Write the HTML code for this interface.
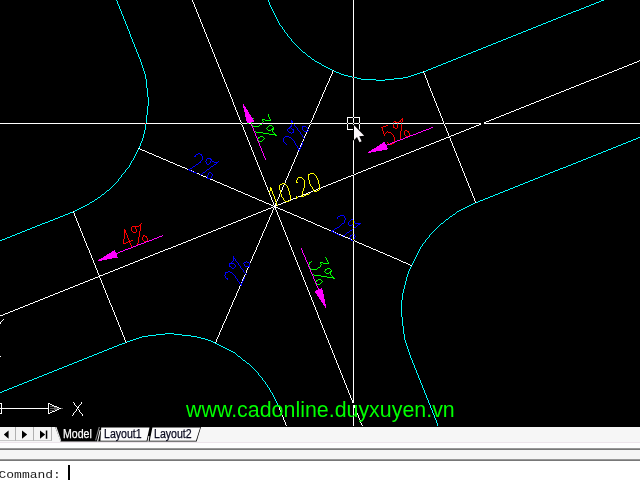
<!DOCTYPE html>
<html><head><meta charset="utf-8"><title>CAD</title>
<style>
html,body{margin:0;padding:0;background:#000;}
body{width:640px;height:480px;overflow:hidden;position:relative;font-family:"Liberation Sans",sans-serif;}
#draw{position:absolute;left:0;top:0;width:640px;height:427px;background:#000;overflow:hidden;}
.xh{position:absolute;background:#fff;mix-blend-mode:difference;}
#wm{position:absolute;left:186px;top:398px;font-size:21.4px;line-height:24px;color:#00ff00;white-space:nowrap;}
#tabs{position:absolute;left:0;top:427px;width:640px;height:15px;background:#f6f6f6;}
#gap1{position:absolute;left:0;top:442px;width:640px;height:1px;background:#ece4ea;}
#gap2{position:absolute;left:0;top:443px;width:640px;height:5px;background:#fdfdfd;}
#l1{position:absolute;left:0;top:448px;width:640px;height:2px;background:linear-gradient(#a8a8a8,#686868);}
#gap3{position:absolute;left:0;top:450px;width:640px;height:9px;background:#f5f5f5;}
#l2{position:absolute;left:0;top:459px;width:640px;height:2px;background:linear-gradient(#a8a8a8,#686868);}
#cmd{position:absolute;left:0;top:461px;width:640px;height:19px;background:#fff;}
#cmdt{position:absolute;left:-1.5px;top:466.7px;font-family:"Liberation Mono",monospace;font-size:13px;line-height:16px;color:#1a1a1a;transform:scaleY(0.87);transform-origin:0 12px;white-space:pre;}
#caret{position:absolute;left:68px;top:465px;width:2px;height:15px;background:#000;}
.btn{position:absolute;top:427px;height:14px;background:#f4f4f4;border-right:1px solid #b0b0b0;border-bottom:1px solid #c8c8c8;box-sizing:border-box;}
.tab{position:absolute;top:426.5px;height:14px;font-size:12.3px;line-height:14px;white-space:nowrap;transform:scaleX(0.86);transform-origin:0 0;-webkit-text-stroke:0.25px;}
</style></head><body>
<div id="draw">
<svg width="640" height="427" viewBox="0 -0.5 640 427" style="position:absolute;left:0;top:0" shape-rendering="crispEdges" fill="none" stroke-width="1">
<path stroke="#00ffff" d="M116 0h1M268 0h1M601 0h3M117 1h1M268 1h1M599 1h2M117 2h1M269 2h1M596 2h3M117 3h1M269 3h1M594 3h2M118 4h1M269 4h1M591 4h3M118 5h1M270 5h1M589 5h2M119 6h1M270 6h1M586 6h3M119 7h1M271 7h1M584 7h2M119 8h1M271 8h1M581 8h3M120 9h1M272 9h1M579 9h2M120 10h1M272 10h1M576 10h3M121 11h1M273 11h1M573 11h3M121 12h1M273 12h1M571 12h2M121 13h1M274 13h1M568 13h3M122 14h1M274 14h1M566 14h2M122 15h1M275 15h1M563 15h3M123 16h1M275 16h1M561 16h2M123 17h1M276 17h1M558 17h3M123 18h1M276 18h1M556 18h2M124 19h1M277 19h1M553 19h3M124 20h1M277 20h1M551 20h2M125 21h1M278 21h1M548 21h3M125 22h1M278 22h1M546 22h2M125 23h1M279 23h1M543 23h3M126 24h1M279 24h1M541 24h2M126 25h1M280 25h1M538 25h3M127 26h1M281 26h1M536 26h2M127 27h1M282 27h1M533 27h3M127 28h1M282 28h1M531 28h2M128 29h1M283 29h1M528 29h3M128 30h1M284 30h1M526 30h2M129 31h1M284 31h1M523 31h3M129 32h1M285 32h1M521 32h2M129 33h1M286 33h1M518 33h3M130 34h1M287 34h1M516 34h2M130 35h1M287 35h1M513 35h3M130 36h1M288 36h1M511 36h2M131 37h1M289 37h1M508 37h3M131 38h1M290 38h1M506 38h2M132 39h1M291 39h1M503 39h3M132 40h1M291 40h1M501 40h2M132 41h1M292 41h1M498 41h3M133 42h1M293 42h1M496 42h2M133 43h1M294 43h1M493 43h3M134 44h1M295 44h1M491 44h2M134 45h1M296 45h1M488 45h3M134 46h1M297 46h1M486 46h2M135 47h1M298 47h1M483 47h3M135 48h1M299 48h1M481 48h2M136 49h1M300 49h1M478 49h3M136 50h1M301 50h1M476 50h2M136 51h1M302 51h1M473 51h3M137 52h1M303 52h2M471 52h2M137 53h1M305 53h1M468 53h3M138 54h1M306 54h1M466 54h2M138 55h1M307 55h1M463 55h3M138 56h1M308 56h2M461 56h2M139 57h1M310 57h1M458 57h3M139 58h1M311 58h1M456 58h2M140 59h1M312 59h2M453 59h3M140 60h1M314 60h1M451 60h2M140 61h1M315 61h2M448 61h3M141 62h1M317 62h2M446 62h2M141 63h1M319 63h2M443 63h3M141 64h1M321 64h1M441 64h2M142 65h1M322 65h2M438 65h3M142 66h1M324 66h2M436 66h2M142 67h1M326 67h2M433 67h3M143 68h1M328 68h2M431 68h2M143 69h1M330 69h2M428 69h3M143 70h1M332 70h1M426 70h2M144 71h1M334 71h2M424 71h2M144 72h1M336 72h3M420 72h3M144 73h1M339 73h2M417 73h3M145 74h1M341 74h3M414 74h3M145 75h1M344 75h4M411 75h3M145 76h1M348 76h4M408 76h3M145 77h1M352 77h5M403 77h5M145 78h1M357 78h4M394 78h9M146 79h1M361 79h15M385 79h9M146 80h1M376 80h9M146 81h1M146 82h1M146 83h1M146 84h1M146 85h1M146 86h1M146 87h1M147 88h1M147 89h1M147 90h1M147 91h1M147 92h1M147 93h1M147 94h1M147 95h1M147 96h1M148 97h1M148 98h1M148 99h1M148 100h1M148 101h1M148 102h1M148 103h1M148 104h1M148 105h1M147 106h1M147 107h1M147 108h1M147 109h1M147 110h1M147 111h1M147 112h1M147 113h1M147 114h1M146 115h1M146 116h1M146 117h1M146 118h1M146 119h1M146 120h1M146 121h1M146 122h1M145 123h1M145 124h1M145 125h1M145 126h1M145 127h1M145 128h1M145 129h1M144 130h1M144 131h1M144 132h1M144 133h1M143 134h1M143 135h1M143 136h1M143 137h1M638 137h2M142 138h1M636 138h2M142 139h1M633 139h3M142 140h1M631 140h2M141 141h1M628 141h3M141 142h1M626 142h2M140 143h1M623 143h3M140 144h1M621 144h2M140 145h1M618 145h3M139 146h1M616 146h2M139 147h1M613 147h3M611 148h2M138 149h1M608 149h3M137 150h1M606 150h2M137 151h1M603 151h3M136 152h1M601 152h2M136 153h1M598 153h3M135 154h1M596 154h2M135 155h1M593 155h3M134 156h1M591 156h2M134 157h1M588 157h3M133 158h1M586 158h2M133 159h1M583 159h3M132 160h1M581 160h2M131 161h1M578 161h3M131 162h1M576 162h2M130 163h1M573 163h3M130 164h1M571 164h2M129 165h1M568 165h3M129 166h1M566 166h2M128 167h1M563 167h3M127 168h1M560 168h3M126 169h1M558 169h2M125 170h1M555 170h3M125 171h1M553 171h2M124 172h1M550 172h3M123 173h1M548 173h2M122 174h1M545 174h3M121 175h1M543 175h2M121 176h1M540 176h3M120 177h1M538 177h2M119 178h1M535 178h3M118 179h1M533 179h2M118 180h1M530 180h3M117 181h1M528 181h2M116 182h1M525 182h3M115 183h1M523 183h2M114 184h1M520 184h3M113 185h1M518 185h2M112 186h1M515 186h3M111 187h1M513 187h2M110 188h1M510 188h3M109 189h1M508 189h2M107 190h2M505 190h3M106 191h1M503 191h2M105 192h1M500 192h3M104 193h1M498 193h2M102 194h2M495 194h3M101 195h1M493 195h2M100 196h1M490 196h3M98 197h2M488 197h2M97 198h1M485 198h3M95 199h2M483 199h2M94 200h1M480 200h3M92 201h2M478 201h2M90 202h2M476 202h2M89 203h1M473 203h2M87 204h2M471 204h2M85 205h2M469 205h2M83 206h2M467 206h2M81 207h2M465 207h2M79 208h2M463 208h2M77 209h2M461 209h2M75 210h2M459 210h2M74 211h1M457 211h2M70 212h3M456 212h1M68 213h2M455 213h1M65 214h3M453 214h2M63 215h2M452 215h1M60 216h3M450 216h2M58 217h2M449 217h1M55 218h3M448 218h1M53 219h2M446 219h2M50 220h3M445 220h1M48 221h2M444 221h1M45 222h3M443 222h1M42 223h3M441 223h2M40 224h2M440 224h1M37 225h3M439 225h1M35 226h2M438 226h1M32 227h3M437 227h1M30 228h2M436 228h1M27 229h3M435 229h1M25 230h2M434 230h1M22 231h3M433 231h1M20 232h2M432 232h1M17 233h3M431 233h1M15 234h2M430 234h1M12 235h3M429 235h1M10 236h2M429 236h1M7 237h3M428 237h1M5 238h2M427 238h1M2 239h3M426 239h1M0 240h2M425 240h1M425 241h1M424 242h1M423 243h1M422 244h1M422 245h1M421 246h1M420 247h1M420 248h1M419 249h1M419 250h1M418 251h1M418 252h1M417 253h1M417 254h1M416 255h1M416 256h1M415 257h1M415 258h1M414 259h1M414 260h1M413 261h1M413 262h1M412 263h1M412 264h1M411 266h1M410 267h1M410 268h1M409 269h1M409 270h1M408 271h1M408 272h1M408 273h1M407 274h1M407 275h1M407 276h1M406 277h1M406 278h1M406 279h1M406 280h1M405 281h1M405 282h1M405 283h1M405 284h1M404 285h1M404 286h1M404 287h1M404 288h1M403 289h1M403 290h1M403 291h1M403 292h1M402 293h1M402 294h1M402 295h1M402 296h1M402 297h1M402 298h1M402 299h1M401 300h1M401 301h1M401 302h1M401 303h1M401 304h1M401 305h1M401 306h1M401 307h1M401 308h1M401 309h1M401 310h1M401 311h1M401 312h1M401 313h1M401 314h1M401 315h1M401 316h1M402 317h1M402 318h1M402 319h1M402 320h1M402 321h1M402 322h1M402 323h1M402 324h1M402 325h1M403 326h1M403 327h1M403 328h1M403 329h1M403 330h1M403 331h1M403 332h1M165 333h9M403 333h1M156 334h9M174 334h8M404 334h1M148 335h8M182 335h9M404 335h1M142 336h6M191 336h6M404 336h1M139 337h3M197 337h4M404 337h1M136 338h3M201 338h4M404 338h1M133 339h3M205 339h3M404 339h1M130 340h3M208 340h3M405 340h1M127 341h3M211 341h2M405 341h1M125 342h1M213 342h2M405 342h1M122 343h3M215 343h2M406 343h1M119 344h3M217 344h2M406 344h1M117 345h2M219 345h2M406 345h1M114 346h3M221 346h2M407 346h1M112 347h2M223 347h2M407 347h1M109 348h3M225 348h2M407 348h1M107 349h2M227 349h2M408 349h1M104 350h3M229 350h2M408 350h1M102 351h2M231 351h2M408 351h1M99 352h3M233 352h2M409 352h1M97 353h2M235 353h1M409 353h1M94 354h3M236 354h1M409 354h1M92 355h2M237 355h1M410 355h1M89 356h3M238 356h2M410 356h1M87 357h2M240 357h1M410 357h1M84 358h3M241 358h1M411 358h1M82 359h2M242 359h1M411 359h1M79 360h3M243 360h2M412 360h1M77 361h2M245 361h1M412 361h1M74 362h3M246 362h1M412 362h1M72 363h2M247 363h2M413 363h1M69 364h3M249 364h1M413 364h1M67 365h2M250 365h1M414 365h1M64 366h3M251 366h1M414 366h1M62 367h2M252 367h1M414 367h1M59 368h3M253 368h1M415 368h1M57 369h2M254 369h1M415 369h1M54 370h3M255 370h1M416 370h1M52 371h2M256 371h1M416 371h1M49 372h3M257 372h1M416 372h1M47 373h2M258 373h1M417 373h1M44 374h3M258 374h1M417 374h1M42 375h2M259 375h1M418 375h1M39 376h3M260 376h1M418 376h1M37 377h2M261 377h1M418 377h1M34 378h3M262 378h1M419 378h1M32 379h2M262 379h1M419 379h1M29 380h3M263 380h1M420 380h1M27 381h2M264 381h1M420 381h1M24 382h3M265 382h1M420 382h1M22 383h2M265 383h1M421 383h1M19 384h3M266 384h1M421 384h1M17 385h2M267 385h1M422 385h1M14 386h3M267 386h1M422 386h1M12 387h2M268 387h1M422 387h1M9 388h3M269 388h1M423 388h1M7 389h2M269 389h1M423 389h1M4 390h3M270 390h1M424 390h1M2 391h2M270 391h1M424 391h1M0 392h2M271 392h1M424 392h1M272 393h1M425 393h1M272 394h1M425 394h1M273 395h1M426 395h1M273 396h1M426 396h1M274 397h1M426 397h1M274 398h1M427 398h1M275 399h1M427 399h1M275 400h1M428 400h1M276 401h1M428 401h1M276 402h1M428 402h1M277 403h1M429 403h1M277 404h1M429 404h1M278 405h1M430 405h1M278 406h1M430 406h1M430 407h1M431 408h1M431 409h1M432 410h1M432 411h1M432 412h1M433 413h1M433 414h1M434 415h1M434 416h1M434 417h1M435 418h1M435 419h1M436 420h1M436 421h1M436 422h1M437 423h1M437 424h1M437 425h1"/>
<path stroke="#ffffff" d="M192 0h1M192 1h1M193 2h1M193 3h1M194 4h1M194 5h1M194 6h1M195 7h1M195 8h1M196 9h1M196 10h1M196 11h1M197 12h1M197 13h1M198 14h1M198 15h1M198 16h1M199 17h1M199 18h1M200 19h1M200 20h1M200 21h1M201 22h1M201 23h1M202 24h1M202 25h1M202 26h1M203 27h1M203 28h1M204 29h1M204 30h1M204 31h1M205 32h1M205 33h1M206 34h1M206 35h1M206 36h1M207 37h1M207 38h1M208 39h1M208 40h1M208 41h1M209 42h1M209 43h1M210 44h1M210 45h1M210 46h1M211 47h1M211 48h1M212 49h1M212 50h1M212 51h1M213 52h1M213 53h1M214 54h1M214 55h1M214 56h1M215 57h1M215 58h1M216 59h1M216 60h1M639 60h1M216 61h1M637 61h2M217 62h1M634 62h3M217 63h1M632 63h2M218 64h1M629 64h3M218 65h1M627 65h2M218 66h1M624 66h3M219 67h1M622 67h2M219 68h1M619 68h3M220 69h1M617 69h2M220 70h1M333 70h1M614 70h3M220 71h1M332 71h1M423 71h1M612 71h2M221 72h1M332 72h1M423 72h1M609 72h3M221 73h1M332 73h1M424 73h1M607 73h2M222 74h1M331 74h1M424 74h1M604 74h3M222 75h1M331 75h1M425 75h1M602 75h2M222 76h1M330 76h1M425 76h1M599 76h3M223 77h1M330 77h1M425 77h1M597 77h2M223 78h1M329 78h1M426 78h1M594 78h3M224 79h1M329 79h1M426 79h1M591 79h3M224 80h1M329 80h1M427 80h1M589 80h2M224 81h1M328 81h1M427 81h1M586 81h3M225 82h1M328 82h1M427 82h1M584 82h2M225 83h1M327 83h1M428 83h1M581 83h3M226 84h1M327 84h1M428 84h1M579 84h2M226 85h1M326 85h1M428 85h1M576 85h3M226 86h1M326 86h1M429 86h1M574 86h2M227 87h1M325 87h1M429 87h1M571 87h3M227 88h1M325 88h1M430 88h1M569 88h2M228 89h1M325 89h1M430 89h1M566 89h3M228 90h1M324 90h1M430 90h1M564 90h2M228 91h1M324 91h1M431 91h1M561 91h3M229 92h1M323 92h1M431 92h1M559 92h2M229 93h1M323 93h1M432 93h1M556 93h3M230 94h1M322 94h1M432 94h1M554 94h2M230 95h1M322 95h1M432 95h1M551 95h3M230 96h1M322 96h1M433 96h1M549 96h2M231 97h1M321 97h1M433 97h1M546 97h3M231 98h1M321 98h1M434 98h1M544 98h2M232 99h1M320 99h1M434 99h1M541 99h3M232 100h1M320 100h1M434 100h1M539 100h2M232 101h1M319 101h1M435 101h1M536 101h3M233 102h1M319 102h1M435 102h1M534 102h2M233 103h1M319 103h1M436 103h1M531 103h3M233 104h1M318 104h1M436 104h1M529 104h2M234 105h1M318 105h1M436 105h1M526 105h3M234 106h1M317 106h1M437 106h1M524 106h2M235 107h1M317 107h1M437 107h1M521 107h3M235 108h1M316 108h1M438 108h1M519 108h2M235 109h1M316 109h1M438 109h1M516 109h3M236 110h1M316 110h1M438 110h1M514 110h2M236 111h1M315 111h1M439 111h1M511 111h3M237 112h1M315 112h1M439 112h1M509 112h2M237 113h1M314 113h1M440 113h1M506 113h3M237 114h1M314 114h1M440 114h1M504 114h2M238 115h1M313 115h1M440 115h1M501 115h3M238 116h1M313 116h1M441 116h1M499 116h2M239 117h1M313 117h1M441 117h1M496 117h3M239 118h1M312 118h1M442 118h1M494 118h2M239 119h1M312 119h1M442 119h1M491 119h3M240 120h1M311 120h1M442 120h1M489 120h2M240 121h1M311 121h1M443 121h1M486 121h3M241 122h1M310 122h1M443 122h1M484 122h2M241 123h1M310 123h1M444 123h1M481 123h3M241 124h1M310 124h1M444 124h1M479 124h2M242 125h1M309 125h1M444 125h1M476 125h3M242 126h1M309 126h1M445 126h1M474 126h2M243 127h1M308 127h1M445 127h1M471 127h3M243 128h1M308 128h1M446 128h1M469 128h2M243 129h1M446 129h1M466 129h3M244 130h1M307 130h1M446 130h1M464 130h2M244 131h1M447 131h1M461 131h3M245 132h1M306 132h1M447 132h1M459 132h2M245 133h1M306 133h1M448 133h1M456 133h3M245 134h1M305 134h1M448 134h1M454 134h2M246 135h1M305 135h1M448 135h1M451 135h3M246 136h1M304 136h1M449 136h2M247 137h1M304 137h1M446 137h4M247 138h1M444 138h2M450 138h1M247 139h1M303 139h1M441 139h3M450 139h1M248 140h1M303 140h1M439 140h2M450 140h1M248 141h1M302 141h1M436 141h3M451 141h1M249 142h1M434 142h2M451 142h1M249 143h1M301 143h1M431 143h3M452 143h1M249 144h1M301 144h1M429 144h2M452 144h1M250 145h1M300 145h1M426 145h3M452 145h1M250 146h1M300 146h1M424 146h2M453 146h1M251 147h1M421 147h3M453 147h1M138 148h2M251 148h1M299 148h1M419 148h2M454 148h1M140 149h2M251 149h1M416 149h3M454 149h1M142 150h3M252 150h1M298 150h1M414 150h2M454 150h1M145 151h2M252 151h1M298 151h1M411 151h3M455 151h1M147 152h2M253 152h1M297 152h1M409 152h2M455 152h1M149 153h3M253 153h1M297 153h1M406 153h3M456 153h1M152 154h2M253 154h1M297 154h1M404 154h2M456 154h1M154 155h2M254 155h1M296 155h1M401 155h3M456 155h1M156 156h3M254 156h1M296 156h1M399 156h2M457 156h1M159 157h2M255 157h1M295 157h1M396 157h3M457 157h1M161 158h2M255 158h1M295 158h1M394 158h2M458 158h1M163 159h3M255 159h1M294 159h1M391 159h3M458 159h1M166 160h2M256 160h1M294 160h1M389 160h2M458 160h1M168 161h2M256 161h1M294 161h1M386 161h3M459 161h1M170 162h3M257 162h1M293 162h1M384 162h2M459 162h1M173 163h2M257 163h1M293 163h1M381 163h3M460 163h1M175 164h2M257 164h1M292 164h1M378 164h3M460 164h1M177 165h3M258 165h1M292 165h1M376 165h2M460 165h1M180 166h2M258 166h1M291 166h1M373 166h3M461 166h1M182 167h3M259 167h1M291 167h1M371 167h2M461 167h1M185 168h2M259 168h1M291 168h1M368 168h3M462 168h1M187 169h1M259 169h1M290 169h1M366 169h2M462 169h1M191 170h1M260 170h1M290 170h1M363 170h3M462 170h1M193 171h1M260 171h1M289 171h1M361 171h2M463 171h1M261 172h1M289 172h1M358 172h3M463 172h1M197 173h2M261 173h1M288 173h1M356 173h2M464 173h1M199 174h1M261 174h1M288 174h1M353 174h3M464 174h1M201 175h2M262 175h1M288 175h1M351 175h2M464 175h1M203 176h3M262 176h1M287 176h1M348 176h3M465 176h1M206 177h1M263 177h1M287 177h1M346 177h2M465 177h1M263 178h1M286 178h1M343 178h3M466 178h1M210 179h3M263 179h1M286 179h1M341 179h2M466 179h1M213 180h2M264 180h1M285 180h1M338 180h3M466 180h1M215 181h2M264 181h1M285 181h1M336 181h2M467 181h1M217 182h3M265 182h1M285 182h1M333 182h3M467 182h1M220 183h2M265 183h1M331 183h2M468 183h1M222 184h2M265 184h1M284 184h1M328 184h3M468 184h1M224 185h3M266 185h1M283 185h1M326 185h2M468 185h1M227 186h2M266 186h1M283 186h1M323 186h3M469 186h1M229 187h2M267 187h1M282 187h1M321 187h2M469 187h1M231 188h3M267 188h1M282 188h1M318 188h1M320 188h1M470 188h1M234 189h2M267 189h1M282 189h1M316 189h2M470 189h1M236 190h2M268 190h1M281 190h1M314 190h2M470 190h1M238 191h3M268 191h1M281 191h1M311 191h2M471 191h1M241 192h2M308 192h3M471 192h1M243 193h2M269 193h1M306 193h2M472 193h1M245 194h3M269 194h1M279 194h1M303 194h3M472 194h1M248 195h2M270 195h1M279 195h1M302 195h1M472 195h1M250 196h2M270 196h1M279 196h1M298 196h3M473 196h1M252 197h3M271 197h1M278 197h1M473 197h1M255 198h2M271 198h1M278 198h1M293 198h3M474 198h1M257 199h2M271 199h1M277 199h1M291 199h2M474 199h1M259 200h3M272 200h1M277 200h1M288 200h1M290 200h1M474 200h1M262 201h2M272 201h1M276 201h1M475 201h1M264 202h2M273 202h1M283 202h3M475 202h1M266 203h3M273 203h1M275 203h1M281 203h2M269 204h2M273 204h1M275 204h1M278 204h3M271 205h2M274 205h3M273 206h3M271 207h2M274 207h4M268 208h3M273 208h1M275 208h1M278 208h2M266 209h2M273 209h1M275 209h1M280 209h3M263 210h3M272 210h1M276 210h1M283 210h2M73 211h1M261 211h2M272 211h1M276 211h1M285 211h2M73 212h1M258 212h3M272 212h1M277 212h1M287 212h3M74 213h1M256 213h2M271 213h1M277 213h1M290 213h2M74 214h1M253 214h3M271 214h1M277 214h1M292 214h2M74 215h1M251 215h2M270 215h1M278 215h1M294 215h3M75 216h1M248 216h3M270 216h1M278 216h1M297 216h2M75 217h1M246 217h2M269 217h1M279 217h1M299 217h2M76 218h1M243 218h3M269 218h1M279 218h1M301 218h3M76 219h1M241 219h2M269 219h1M279 219h1M304 219h2M76 220h1M238 220h3M268 220h1M280 220h1M306 220h2M77 221h1M236 221h2M268 221h1M280 221h1M308 221h3M77 222h1M233 222h3M267 222h1M281 222h1M311 222h2M78 223h1M231 223h2M267 223h1M281 223h1M313 223h2M78 224h1M228 224h3M266 224h1M281 224h1M315 224h2M78 225h1M226 225h2M266 225h1M282 225h1M317 225h3M79 226h1M223 226h3M266 226h1M282 226h1M320 226h2M79 227h1M221 227h2M265 227h1M283 227h1M322 227h2M80 228h1M218 228h3M265 228h1M283 228h1M324 228h3M80 229h1M216 229h2M264 229h1M283 229h1M327 229h2M80 230h1M213 230h3M264 230h1M284 230h1M329 230h2M81 231h1M211 231h2M263 231h1M284 231h1M333 231h1M81 232h1M208 232h3M263 232h1M285 232h1M335 232h1M82 233h1M206 233h2M262 233h1M285 233h1M337 233h1M82 234h1M203 234h3M262 234h1M285 234h1M339 234h2M82 235h1M201 235h2M262 235h1M286 235h1M341 235h2M83 236h1M198 236h3M261 236h1M286 236h1M343 236h2M83 237h1M196 237h2M261 237h1M287 237h1M345 237h3M84 238h1M193 238h3M260 238h1M287 238h1M348 238h2M84 239h1M191 239h2M260 239h1M287 239h1M351 239h1M84 240h1M188 240h3M259 240h1M288 240h1M353 240h2M85 241h1M186 241h2M259 241h1M288 241h1M355 241h2M85 242h1M183 242h3M259 242h1M289 242h1M357 242h2M86 243h1M181 243h2M258 243h1M289 243h1M359 243h3M86 244h1M178 244h3M258 244h1M289 244h1M362 244h2M86 245h1M176 245h2M257 245h1M290 245h1M364 245h2M87 246h1M173 246h3M257 246h1M290 246h1M366 246h3M87 247h1M171 247h2M256 247h1M291 247h1M369 247h2M88 248h1M168 248h3M256 248h1M291 248h1M371 248h2M88 249h1M165 249h3M256 249h1M291 249h1M373 249h3M89 250h1M163 250h2M255 250h1M292 250h1M376 250h2M89 251h1M160 251h3M255 251h1M292 251h1M378 251h2M89 252h1M158 252h2M254 252h1M293 252h1M380 252h3M90 253h1M155 253h3M254 253h1M293 253h1M383 253h2M90 254h1M153 254h2M253 254h1M293 254h1M385 254h2M91 255h1M150 255h3M253 255h1M294 255h1M387 255h3M91 256h1M148 256h2M252 256h1M294 256h1M390 256h2M91 257h1M145 257h3M252 257h1M295 257h1M392 257h2M92 258h1M143 258h2M252 258h1M295 258h1M394 258h3M92 259h1M140 259h3M251 259h1M295 259h1M397 259h2M93 260h1M138 260h2M251 260h1M296 260h1M399 260h2M93 261h1M135 261h3M250 261h1M296 261h1M401 261h2M93 262h1M133 262h2M250 262h1M297 262h1M403 262h3M94 263h1M130 263h3M297 263h1M406 263h2M94 264h1M128 264h2M297 264h1M408 264h2M95 265h1M125 265h3M298 265h1M410 265h2M95 266h1M123 266h2M298 266h1M95 267h1M120 267h3M248 267h1M299 267h1M96 268h1M118 268h2M247 268h1M299 268h1M96 269h1M115 269h3M247 269h1M299 269h1M97 270h1M113 270h2M246 270h1M300 270h1M97 271h1M110 271h3M246 271h1M300 271h1M97 272h1M108 272h2M246 272h1M301 272h1M98 273h1M105 273h3M301 273h1M98 274h1M103 274h2M245 274h1M301 274h1M99 275h4M244 275h1M302 275h1M98 276h2M244 276h1M302 276h1M95 277h3M99 277h1M243 277h1M303 277h1M93 278h2M100 278h1M243 278h1M303 278h1M90 279h3M100 279h1M242 279h1M303 279h1M88 280h2M101 280h1M242 280h1M304 280h1M85 281h3M101 281h1M304 281h1M83 282h2M101 282h1M241 282h1M305 282h1M80 283h3M102 283h1M305 283h1M78 284h2M102 284h1M305 284h1M75 285h3M103 285h1M240 285h1M306 285h1M73 286h2M103 286h1M239 286h1M306 286h1M70 287h3M103 287h1M239 287h1M307 287h1M68 288h2M104 288h1M239 288h1M307 288h1M65 289h3M104 289h1M238 289h1M307 289h1M63 290h2M105 290h1M238 290h1M308 290h1M60 291h3M105 291h1M237 291h1M308 291h1M58 292h2M105 292h1M237 292h1M309 292h1M55 293h3M106 293h1M236 293h1M309 293h1M53 294h2M106 294h1M236 294h1M309 294h1M50 295h3M107 295h1M236 295h1M310 295h1M48 296h2M107 296h1M235 296h1M310 296h1M45 297h3M107 297h1M235 297h1M311 297h1M43 298h2M108 298h1M234 298h1M311 298h1M40 299h3M108 299h1M234 299h1M311 299h1M38 300h2M109 300h1M233 300h1M312 300h1M35 301h3M109 301h1M233 301h1M312 301h1M33 302h2M109 302h1M232 302h1M313 302h1M30 303h3M110 303h1M232 303h1M313 303h1M28 304h2M110 304h1M232 304h1M313 304h1M25 305h3M111 305h1M231 305h1M314 305h1M23 306h2M111 306h1M231 306h1M314 306h1M20 307h3M112 307h1M230 307h1M315 307h1M18 308h2M112 308h1M230 308h1M315 308h1M15 309h3M112 309h1M229 309h1M315 309h1M13 310h2M113 310h1M229 310h1M316 310h1M10 311h3M113 311h1M229 311h1M316 311h1M8 312h2M114 312h1M228 312h1M317 312h1M5 313h3M114 313h1M228 313h1M317 313h1M3 314h2M114 314h1M227 314h1M317 314h1M0 315h3M115 315h1M227 315h1M318 315h1M115 316h1M226 316h1M318 316h1M116 317h1M226 317h1M318 317h1M116 318h1M226 318h1M319 318h1M3 319h1M116 319h1M225 319h1M319 319h1M2 320h1M117 320h1M225 320h1M320 320h1M1 321h1M117 321h1M224 321h1M320 321h1M0 322h1M118 322h1M224 322h1M320 322h1M0 323h1M118 323h1M223 323h1M321 323h1M118 324h1M223 324h1M321 324h1M119 325h1M222 325h1M322 325h1M119 326h1M222 326h1M322 326h1M120 327h1M222 327h1M322 327h1M120 328h1M221 328h1M323 328h1M120 329h1M221 329h1M323 329h1M121 330h1M220 330h1M324 330h1M121 331h1M220 331h1M324 331h1M122 332h1M219 332h1M324 332h1M122 333h1M219 333h1M325 333h1M122 334h1M219 334h1M325 334h1M123 335h1M218 335h1M326 335h1M123 336h1M218 336h1M326 336h1M124 337h1M217 337h1M326 337h1M124 338h1M217 338h1M327 338h1M124 339h1M216 339h1M327 339h1M125 340h1M216 340h1M328 340h1M125 341h1M216 341h1M328 341h1M126 342h1M215 342h1M328 342h1M329 343h1M329 344h1M330 345h1M330 346h1M330 347h1M331 348h1M331 349h1M332 350h1M332 351h1M332 352h1M333 353h1M333 354h1M334 355h1M0 356h1M334 356h1M334 357h1M335 358h1M335 359h1M336 360h1M336 361h1M336 362h1M337 363h1M337 364h1M338 365h1M338 366h1M338 367h1M339 368h1M339 369h1M340 370h1M340 371h1M340 372h1M341 373h1M341 374h1M342 375h1M342 376h1M342 377h1M343 378h1M343 379h1M344 380h1M344 381h1M344 382h1M345 383h1M345 384h1M346 385h1M346 386h1M346 387h1M347 388h1M347 389h1M348 390h1M348 391h1M348 392h1M349 393h1M349 394h1M350 395h1M350 396h1M350 397h1M351 398h1M351 399h1M352 400h1M352 401h1M73 402h1M81 402h1M352 402h1M0 403h2M48 403h2M74 403h1M81 403h1M353 403h1M1 404h1M48 404h1M50 404h2M74 404h1M80 404h1M353 404h1M1 405h1M48 405h1M52 405h2M75 405h1M79 405h1M354 405h1M1 406h1M48 406h1M54 406h3M76 406h1M78 406h1M354 406h1M1 407h1M48 407h1M57 407h2M77 407h2M279 407h1M354 407h1M0 408h49M59 408h2M77 408h1M279 408h1M355 408h1M1 409h1M48 409h1M57 409h2M76 409h1M78 409h1M279 409h1M355 409h1M1 410h1M48 410h1M55 410h2M76 410h1M79 410h1M280 410h1M356 410h1M1 411h1M48 411h1M52 411h3M75 411h1M79 411h1M280 411h1M356 411h1M1 412h1M48 412h1M50 412h2M74 412h1M80 412h1M281 412h1M356 412h1M0 413h2M48 413h2M73 413h1M81 413h1M281 413h1M357 413h1M73 414h1M82 414h1M281 414h1M357 414h1M72 415h1M82 415h1M282 415h1M358 415h1M282 416h1M358 416h1M283 417h1M358 417h1M283 418h1M359 418h1M283 419h1M359 419h1M284 420h1M360 420h1M284 421h1M360 421h1M285 422h1M360 422h1M285 423h1M361 423h1M285 424h1M361 424h1M286 425h1M362 425h1"/>
<path stroke="#ff00ff" d="M243 104h1M243 105h1M243 106h2M243 107h3M244 108h2M244 109h3M244 110h4M244 111h4M245 112h4M245 113h4M245 114h5M245 115h6M245 116h6M246 117h6M246 118h7M246 119h7M246 120h8M247 121h7M247 122h4M247 123h2M251 123h1M251 124h1M251 125h1M252 126h1M252 127h1M431 127h2M253 128h1M429 128h2M253 129h1M426 129h3M253 130h1M423 130h3M254 131h1M421 131h2M254 132h1M418 132h3M255 133h1M416 133h2M255 134h1M413 134h3M255 135h1M410 135h3M256 136h1M408 136h2M256 137h1M405 137h3M257 138h1M403 138h2M257 139h1M400 139h3M257 140h1M397 140h3M258 141h1M395 141h2M258 142h1M383 142h2M392 142h3M259 143h1M382 143h3M390 143h2M259 144h1M380 144h6M387 144h3M259 145h1M379 145h8M260 146h1M377 146h10M260 147h1M376 147h11M261 148h1M374 148h14M261 149h1M372 149h15M261 150h1M371 150h11M262 151h1M369 151h7M262 152h1M368 152h3M263 153h1M263 154h1M263 155h1M264 156h1M264 157h1M265 158h1M265 159h1M162 235h1M159 236h3M157 237h2M154 238h3M152 239h2M149 240h3M146 241h3M144 242h2M141 243h3M138 244h3M136 245h2M133 246h3M131 247h2M128 248h3M301 248h1M125 249h3M301 249h1M114 250h1M123 250h2M302 250h1M112 251h3M120 251h3M302 251h1M111 252h5M118 252h2M302 252h1M109 253h9M303 253h1M107 254h10M303 254h1M106 255h11M304 255h1M104 256h13M304 256h1M103 257h15M305 257h1M101 258h11M305 258h1M99 259h8M305 259h1M98 260h4M306 260h1M306 261h1M307 262h1M307 263h1M308 264h1M308 265h1M308 266h1M309 267h1M309 268h1M310 269h1M310 270h1M310 271h1M311 272h1M311 273h1M312 274h1M312 275h1M313 276h1M313 277h1M313 278h1M314 279h1M314 280h1M315 281h1M315 282h1M316 283h1M316 284h1M316 285h1M317 286h1M317 287h1M318 288h1M321 288h1M318 289h4M316 290h7M315 291h8M315 292h8M316 293h7M317 294h7M317 295h7M318 296h6M319 297h5M319 298h5M320 299h5M321 300h4M321 301h4M322 302h3M323 303h2M323 304h3M324 305h2M325 306h1M325 307h1"/>
<path stroke="#00ff00" d="M268 114h1M268 115h1M268 116h1M269 117h1M253 118h1M269 118h1M262 119h3M270 119h1M262 120h1M265 120h6M263 121h1M251 122h1M262 122h1M262 123h1M260 124h2M252 125h1M259 125h1M269 125h3M253 126h6M268 126h1M272 126h1M267 127h1M273 127h1M266 128h1M272 128h2M267 129h1M271 129h3M268 130h3M272 130h1M255 131h1M272 131h1M256 132h7M273 132h1M263 133h6M274 133h1M269 134h7M275 135h2M260 136h3M258 137h2M263 137h1M258 138h1M264 138h1M263 139h1M258 140h1M262 140h1M259 141h3M325 257h1M326 258h1M326 259h1M327 260h1M311 261h1M327 261h1M309 262h2M320 262h3M328 262h1M309 263h1M320 263h1M323 263h6M309 264h1M321 264h1M320 265h1M309 266h1M320 266h1M318 267h2M310 268h1M317 268h1M327 268h3M311 269h6M325 269h2M330 269h1M325 270h1M331 270h1M324 271h1M330 271h2M325 272h1M329 272h2M326 273h3M330 273h1M313 274h1M330 274h1M314 275h7M331 275h1M321 276h6M332 276h1M327 277h7M333 278h2M318 279h3M316 280h2M321 280h1M316 281h1M322 281h1M321 282h1M315 283h1M320 283h1M317 284h3"/>
<path stroke="#ff0000" d="M402 118h1M401 119h2M400 120h1M402 120h1M394 121h2M399 121h2M402 121h1M393 122h1M395 122h4M401 122h1M393 123h1M397 123h1M401 123h1M393 124h1M397 124h1M401 124h1M386 125h2M393 125h1M397 125h1M401 125h1M383 126h3M393 126h1M397 126h1M401 126h1M381 127h2M393 127h2M397 127h1M401 127h1M382 128h1M395 128h2M401 128h1M382 129h1M401 129h1M382 130h1M401 130h1M405 130h2M383 131h1M387 131h1M400 131h1M404 131h1M407 131h2M383 132h1M386 132h1M388 132h3M400 132h1M404 132h1M408 132h1M383 133h1M385 133h1M391 133h1M400 133h1M404 133h1M409 133h1M384 134h1M392 134h1M400 134h1M404 134h1M409 134h1M384 135h1M393 135h1M400 135h1M405 135h1M409 135h1M393 136h1M400 136h1M406 136h2M394 137h1M400 137h1M394 138h1M400 138h1M394 139h1M394 140h1M394 141h1M387 142h1M388 143h1M392 143h2M390 144h2M141 223h1M140 224h1M139 225h2M132 226h7M140 226h1M131 227h1M135 227h1M140 227h1M131 228h1M135 228h1M140 228h1M124 229h1M131 229h1M136 229h1M140 229h1M124 230h2M131 230h1M136 230h1M140 230h1M124 231h2M132 231h1M136 231h1M139 231h1M124 232h2M133 232h3M139 232h1M124 233h1M126 233h1M139 233h1M124 234h1M126 234h1M139 234h1M124 235h1M127 235h1M139 235h1M143 235h2M124 236h1M127 236h1M139 236h1M143 236h1M145 236h2M124 237h1M127 237h1M138 237h1M142 237h1M146 237h1M124 238h1M128 238h1M138 238h1M142 238h1M147 238h1M123 239h1M128 239h1M138 239h1M142 239h1M147 239h1M123 240h1M129 240h1M131 240h2M138 240h1M143 240h1M147 240h1M123 241h1M128 241h3M138 241h1M144 241h2M123 242h1M126 242h2M129 242h1M138 242h1M123 243h3M130 243h1M137 243h1M130 244h1M137 244h1M131 245h1M131 246h1"/>
<path stroke="#0000ff" d="M291 120h1M291 121h2M291 122h2M291 123h1M293 123h1M291 124h1M294 124h1M291 125h1M294 125h1M290 126h2M295 126h1M302 126h4M289 127h2M296 127h1M302 127h1M306 127h1M288 128h2M291 128h1M297 128h1M302 128h1M307 128h1M287 129h1M292 129h2M297 129h1M302 129h1M307 129h1M287 130h1M293 130h1M298 130h1M303 130h1M308 130h1M288 131h1M293 131h1M299 131h1M304 131h4M289 132h2M292 132h2M300 132h1M291 133h1M300 133h1M301 134h1M302 135h1M285 136h4M302 136h1M284 137h1M289 137h2M303 137h1M283 138h1M291 138h1M304 138h1M283 139h1M292 139h1M283 140h1M293 140h1M283 141h1M294 141h1M284 142h1M294 142h1M302 142h1M285 143h1M295 143h1M302 143h1M286 144h1M295 144h1M302 144h1M296 145h1M301 145h1M297 146h1M301 146h1M297 147h1M300 147h1M298 148h1M300 148h1M298 149h2M299 150h1M198 153h2M196 154h2M200 154h2M195 155h1M201 155h1M194 156h2M202 156h1M202 157h1M202 158h1M207 158h4M202 159h1M206 159h1M210 159h2M201 160h1M206 160h1M211 160h1M200 161h1M205 161h1M210 161h1M212 161h2M218 161h1M199 162h2M206 162h1M210 162h1M214 162h4M198 163h1M206 163h1M209 163h1M216 163h1M196 164h2M207 164h2M214 164h2M195 165h1M213 165h1M193 166h2M211 166h2M192 167h1M210 167h1M190 168h2M209 168h1M188 169h2M207 169h2M189 170h2M206 170h1M191 171h2M205 171h1M193 172h3M203 172h2M209 172h2M196 173h1M202 173h1M208 173h1M211 173h1M200 174h2M208 174h1M212 174h1M207 175h1M212 175h1M207 176h1M211 176h1M207 177h1M211 177h1M207 178h4M340 215h4M338 216h2M344 216h1M337 217h1M344 217h1M337 218h1M345 218h1M345 219h1M351 219h2M344 220h1M350 220h1M353 220h1M344 221h1M349 221h1M353 221h2M344 222h1M348 222h1M353 222h2M342 223h2M348 223h1M353 223h1M355 223h6M341 224h1M348 224h1M352 224h2M358 224h2M340 225h1M349 225h3M357 225h1M339 226h1M356 226h1M337 227h2M354 227h2M335 228h2M353 228h1M334 229h1M352 229h1M332 230h2M350 230h2M331 231h2M349 231h1M333 232h2M347 232h2M335 233h2M346 233h1M337 234h2M345 234h1M352 234h3M339 235h1M343 235h2M350 235h2M354 235h1M342 236h1M350 236h1M355 236h1M349 237h1M354 237h1M350 238h1M354 238h1M350 239h1M353 239h1M351 240h2M233 256h1M233 257h1M233 258h2M233 259h1M235 259h1M233 260h1M235 260h1M232 261h1M236 261h1M246 261h1M231 262h1M237 262h1M244 262h2M247 262h2M229 263h5M238 263h1M243 263h1M249 263h1M229 264h1M234 264h1M238 264h1M244 264h1M249 264h1M229 265h1M235 265h1M239 265h1M244 265h1M249 265h1M229 266h2M235 266h1M240 266h1M245 266h5M231 267h1M234 267h1M240 267h1M232 268h2M241 268h1M242 269h1M243 270h1M228 271h2M243 271h1M225 272h3M230 272h2M244 272h1M225 273h1M232 273h1M245 273h1M225 274h1M233 274h1M246 274h1M224 275h1M234 275h1M225 276h1M235 276h1M225 277h1M235 277h1M244 277h1M226 278h2M236 278h1M244 278h1M227 279h1M237 279h1M243 279h1M237 280h1M243 280h1M238 281h1M242 281h1M239 282h1M242 282h1M239 283h1M241 283h1M240 284h2M241 285h1"/>
<path stroke="#ffff00" d="M310 173h4M308 174h2M314 174h1M308 175h1M315 175h1M308 176h1M316 176h1M298 177h4M308 177h1M316 177h1M297 178h1M302 178h1M308 178h1M317 178h1M297 179h1M303 179h1M308 179h1M317 179h1M296 180h1M304 180h1M309 180h1M318 180h1M296 181h1M304 181h1M309 181h1M318 181h1M296 182h2M304 182h1M309 182h1M318 182h1M282 183h3M304 183h1M309 183h1M318 183h1M280 184h2M285 184h1M304 184h1M310 184h1M319 184h1M279 185h1M286 185h1M304 185h1M310 185h1M319 185h1M279 186h1M287 186h1M304 186h1M311 186h1M319 186h1M270 187h1M279 187h1M287 187h1M304 187h1M312 187h1M319 187h1M270 188h2M279 188h1M288 188h1M303 188h1M312 188h1M319 188h1M270 189h2M279 189h1M288 189h1M303 189h1M313 189h1M319 189h1M270 190h2M280 190h1M288 190h1M303 190h1M313 190h1M317 190h2M269 191h1M272 191h1M280 191h1M289 191h1M302 191h1M314 191h3M269 192h1M272 192h1M280 192h1M289 192h1M302 192h1M272 193h1M280 193h1M289 193h1M302 193h1M309 193h1M273 194h1M281 194h1M289 194h1M302 194h1M306 194h3M273 195h1M281 195h1M290 195h1M301 195h1M304 195h2M274 196h1M281 196h1M290 196h1M296 196h1M301 196h3M274 197h1M282 197h1M290 197h1M296 197h2M274 198h1M283 198h1M290 198h1M296 198h1M275 199h1M283 199h1M290 199h1M275 200h1M284 200h1M289 200h1M275 201h1M285 201h4M276 202h1M276 203h1M276 204h1M277 205h1"/>
<path stroke="#606060" d="M50 406h4M54 407h3M50 408h9M61 408h2M54 409h3M50 410h4"/>
</svg>
<div class="xh" style="left:0;top:123px;width:640px;height:1px"></div>
<div class="xh" style="left:353px;top:0;width:1px;height:426px"></div>
<div class="xh" style="left:347px;top:117px;width:13px;height:1px"></div>
<div class="xh" style="left:347px;top:129px;width:13px;height:1px"></div>
<div class="xh" style="left:347px;top:118px;width:1px;height:11px"></div>
<div class="xh" style="left:359px;top:118px;width:1px;height:11px"></div>
<div id="wm">www.cadonline.duyxuyen.vn</div>
<svg width="640" height="427" viewBox="0 0 640 427" style="position:absolute;left:0;top:0"><path d="M354 125.2 V139.9 L357 137.1 L359.5 142.2 L361.6 141.3 L359.2 136.3 L364.2 135.8 Z" fill="#fdf8fc" stroke="#000" stroke-width="2" stroke-linejoin="bevel" paint-order="stroke"/></svg>
</div>
<div id="tabs"></div>
<div class="btn" style="left:0;width:16px"></div>
<div class="btn" style="left:16px;width:18px"></div>
<div class="btn" style="left:34px;width:18px"></div>
<svg width="640" height="16" viewBox="0 427 640 16" style="position:absolute;left:0;top:427px">
<path fill="#000" d="M8.6 430.4 V438.8 L3.8 434.6 Z M22 430.4 V438.8 L27.2 434.6 Z M40 430.4 V438.8 L45.2 434.6 Z M45.8 430.4 H47.3 V438.8 H45.8 Z"/>
<path fill="#000" d="M55.2 427 H201 L196.6 441.6 H60.6 Z"/>
<path stroke="#e8e8e8" stroke-width="1.2" fill="none" d="M55.6 426.2 L60.6 440.8"/>
<path stroke="#8a8a8a" stroke-width="1.1" fill="none" d="M99.5 426.2 L95.6 440.4"/>
<path stroke="#f4f4f4" stroke-width="1.1" fill="none" d="M100.2 430 L97.6 441.5"/>
<path fill="#fbfbfb" d="M101.2 427.4 H149.5 L146.6 440.7 H100.4 Z"/>
<path fill="#fbfbfb" d="M152.4 427.4 H200.2 L196 440.7 H149.7 Z"/>
<path fill="#f4f4f4" d="M148.4 436 L149.4 436 L148.6 441.5 L147.4 441.5 Z"/>
</svg>
<div class="tab" style="left:63.2px;color:#fff">Model</div>
<div class="tab" style="left:104.2px;color:#0a0a20">Layout1</div>
<div class="tab" style="left:154.4px;color:#0a0a20">Layout2</div>
<div id="gap1"></div><div id="gap2"></div><div id="l1"></div><div id="gap3"></div><div id="l2"></div>
<div id="cmd"></div>
<div id="cmdt">Command: </div>
<div id="caret"></div>
</body></html>
